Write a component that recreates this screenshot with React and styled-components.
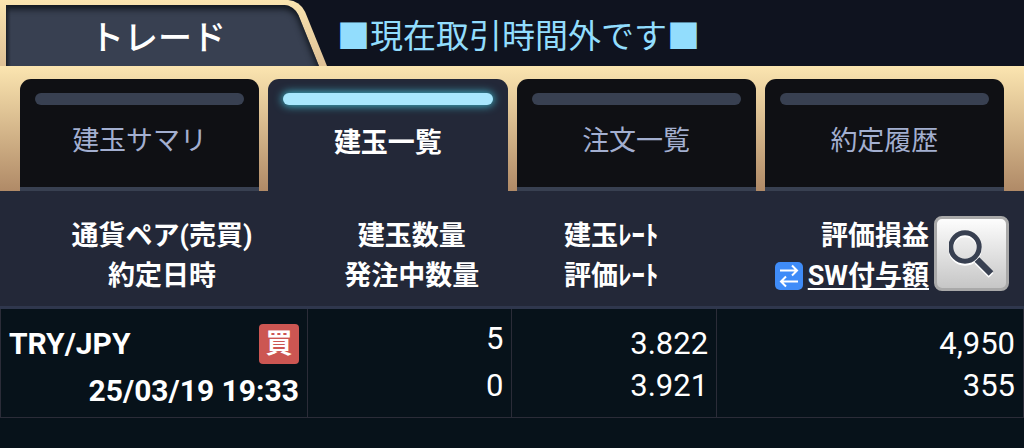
import styled, { createGlobalStyle } from "styled-components";

const tabs = ["建玉サマリ", "建玉一覧", "注文一覧", "約定履歴"];
const activeTab = "建玉一覧";

const positions = [
  {
    pair: "TRY/JPY",
    side: "買",
    date: "25/03/19 19:33",
    amount: "5",
    pending: "0",
    openRate: "3.822",
    rate: "3.921",
    profit: "4,950",
    swap: "355",
  },
];

export default function App() {
  return (
    <>
      <GlobalStyle />
      <Header>
        <TitleTab>
          <TitleFace>
            <Title>トレード</Title>
          </TitleFace>
        </TitleTab>
        <Notice>■現在取引時間外です■</Notice>
      </Header>
      <Tabs>
        {tabs.map((name) => (
          <Tab key={name} type="button" $active={name === activeTab}>
            <Lamp $active={name === activeTab} />
            <span>{name}</span>
          </Tab>
        ))}
      </Tabs>
      <Table>
        <colgroup>
          <Col $width="30%" />
          <Col $width="20%" />
          <Col $width="20%" />
          <Col $width="30%" />
        </colgroup>
        <thead>
          <tr>
            <HeadCell $padding="14px 0 0 16px">
              通貨ペア(売買)
              <br />
              約定日時
            </HeadCell>
            <HeadCell $padding="14px 0 0 4px">
              建玉数量
              <br />
              発注中数量
            </HeadCell>
            <HeadCell $padding="14px 6px 0 0">
              建玉ﾚｰﾄ
              <br />
              評価ﾚｰﾄ
            </HeadCell>
            <HeadCell $padding="14px 14px 0 0">
              <ProfitHead>
                <ProfitLabels>
                  <span>評価損益</span>
                  <SwitchLink href="#swap">
                    <SwitchIcon />
                    <u>SW付与額</u>
                  </SwitchLink>
                </ProfitLabels>
                <SearchButton type="button" aria-label="検索">
                  <SearchIcon />
                </SearchButton>
              </ProfitHead>
            </HeadCell>
          </tr>
        </thead>
        <tbody>
          {positions.map((p) => (
            <tr key={p.date}>
              <Cell $top="8px">
                <Pair>
                  {p.pair}
                  <Side>{p.side}</Side>
                </Pair>
                <OpenDate>{p.date}</OpenDate>
              </Cell>
              <Cell $top="0">
                <Amount>{p.amount}</Amount>
                <Amount>{p.pending}</Amount>
              </Cell>
              <Cell $top="4px">
                <Value>{p.openRate}</Value>
                <Value>{p.rate}</Value>
              </Cell>
              <Cell $top="4px">
                <Value>{p.profit}</Value>
                <Value>{p.swap}</Value>
              </Cell>
            </tr>
          ))}
        </tbody>
      </Table>
    </>
  );
}

function SwitchIcon() {
  return (
    <SwitchBox viewBox="0 0 28 28" aria-hidden="true">
      <path d="M5 8.5H22M17 3.5L22 8.5L17 13.5M23 19.5H6M11 14.5L6 19.5L11 24.5" />
    </SwitchBox>
  );
}

function SearchIcon() {
  return (
    <Glass viewBox="0 0 46 48" aria-hidden="true">
      <circle cx="16" cy="17" r="14.2" strokeWidth="5" />
      <path d="M28 29.5L42 43.5" strokeWidth="6.5" />
    </Glass>
  );
}

const GlobalStyle = createGlobalStyle`
  body {
    margin: 0;
    background-color: #07121a;
    color: #ffffff;
    font-family: Roboto, "Noto Sans CJK JP", sans-serif;
  }

  button {
    font-family: inherit;
    cursor: pointer;
  }
`;

const Header = styled.header`
  height: 66px;
  display: flex;
  background-color: #0f131f;
`;

const TitleTab = styled.div`
  position: relative;
  width: 327px;
  flex-shrink: 0;
  overflow: hidden;
  &::before {
    content: "";
    position: absolute;
    inset: 0 0 0 -60px;
    background: linear-gradient(#fbe5b0, #dfc196);
    border-radius: 0 12px 0 0;
    transform: skewX(22deg);
    transform-origin: bottom right;
  }
`;

const TitleFace = styled.div`
  position: relative;
  height: 61px;
  margin: 5px 8px 0 6px;
  overflow: hidden;
  &::before {
    content: "";
    position: absolute;
    inset: 0 0 -10px -60px;
    background-color: #384051;
    border-radius: 0 10px 0 0;
    box-shadow: inset -2px 4px 6px #10151c;
    transform: skewX(22deg);
    transform-origin: right 61px;
  }
  &::after {
    content: "";
    position: absolute;
    inset: 0 auto 0 0;
    width: 5px;
    background: linear-gradient(to right, #1a1f28, transparent);
  }
`;

const Title = styled.h1`
  position: relative;
  margin: 0;
  padding-left: 84px;
  font-size: 34px;
  line-height: 66px;
  font-weight: 500;
`;

const Notice = styled.p`
  margin: 0;
  padding-left: 10px;
  color: #92ddfd;
  font-size: 33px;
  line-height: 73px;
  white-space: nowrap;
`;

const Tabs = styled.nav`
  display: flex;
  gap: 9px;
  padding: 13px 20px 0;
  background: linear-gradient(#fbe5b0, #b08a67);
`;

const Tab = styled.button`
  flex: 1;
  height: 112px;
  display: flex;
  flex-direction: column;
  gap: ${(props) => (props.$active ? "18px" : "16px")};
  padding: 14px 15px 0;
  border: none;
  border-bottom: 4px solid ${(props) => (props.$active ? "#232838" : "#384051")};
  border-radius: 11px 11px 0 0;
  background-color: ${(props) => (props.$active ? "#232838" : "#0f1014")};
  color: ${(props) => (props.$active ? "#ffffff" : "#a3afd0")};
  font-size: 27px;
  line-height: 40px;
  font-weight: ${(props) => (props.$active ? 700 : 400)};
  text-align: center;
  span {
    width: 100%;
  }
`;

const Lamp = styled.i`
  height: 12px;
  flex-shrink: 0;
  align-self: stretch;
  border-radius: 6px;
  background-color: ${(props) => (props.$active ? "#a8e7fd" : "#384051")};
  box-shadow: ${(props) => (props.$active ? "0 0 8px 1px #3fb4c8" : "none")};
`;

const Table = styled.table`
  width: 100%;
  table-layout: fixed;
  border-collapse: collapse;
`;

const Col = styled.col`
  width: ${(props) => props.$width};
`;

const HeadCell = styled.th`
  height: 100px;
  padding: ${(props) => props.$padding};
  border: 1px solid #232838;
  border-bottom: 3px solid #2f374d;
  background-color: #232838;
  font-size: 27px;
  line-height: 40px;
  font-weight: 700;
  white-space: nowrap;
`;

const ProfitHead = styled.div`
  display: flex;
  justify-content: flex-end;
  align-items: flex-start;
  gap: 5px;
`;

const ProfitLabels = styled.div`
  display: flex;
  flex-direction: column;
  align-items: flex-end;
`;

const SwitchLink = styled.a`
  display: flex;
  align-items: center;
  gap: 5px;
  color: inherit;
  text-decoration: none;
  u {
    text-decoration-thickness: 2px;
    text-underline-offset: 3px;
    text-decoration-skip-ink: none;
  }
`;

const SwitchBox = styled.svg`
  width: 28px;
  height: 28px;
  border-radius: 5px;
  background-color: #3f8cf8;
  fill: none;
  stroke: #ffffff;
  stroke-width: 2;
`;

const SearchButton = styled.button`
  width: 75px;
  height: 75px;
  padding: 0;
  display: flex;
  justify-content: center;
  align-items: center;
  border: 3px solid #a9a9a9;
  border-radius: 8px;
  background: linear-gradient(#fdfdfd, #c6c6c6);
`;

const Glass = styled.svg`
  width: 46px;
  height: 48px;
  fill: none;
  stroke: #384051;
  filter: drop-shadow(0 2px 0 #ffffff);
`;

const Cell = styled.td`
  height: 110px;
  box-sizing: border-box;
  padding: ${(props) => props.$top} 8px 0;
  border: 1px solid #2b2c38;
  text-align: right;
  font-size: 31px;
  &:nth-child(2) {
    padding-bottom: 2px;
  }
`;

const Pair = styled.div`
  display: flex;
  justify-content: space-between;
  align-items: center;
  font-size: 30px;
  line-height: 47px;
  font-weight: 700;
`;

const Side = styled.span`
  width: 40px;
  height: 40px;
  border-radius: 4px;
  background-color: #cc5652;
  font-size: 27px;
  line-height: 40px;
  text-align: center;
`;

const OpenDate = styled.div`
  font-size: 30px;
  line-height: 47px;
  font-weight: 700;
`;

const Amount = styled.div`
  line-height: 47px;
`;

const Value = styled.div`
  line-height: 42px;
`;
